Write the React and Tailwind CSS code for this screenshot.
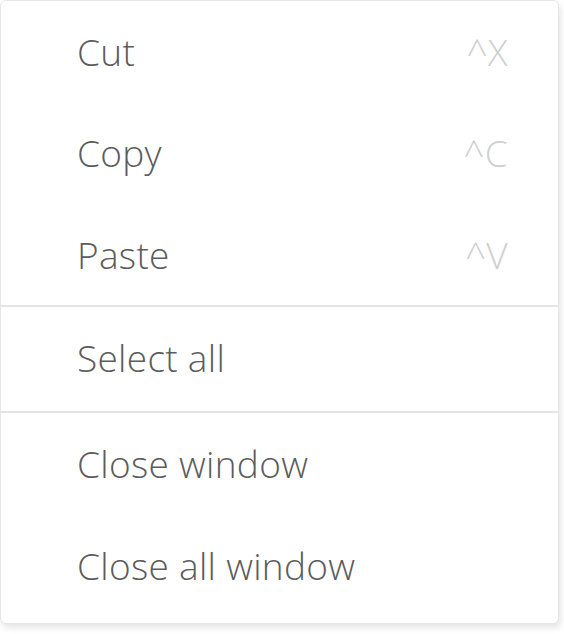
export default function App() {
  return (
    <div className="w-[564px] h-[634px] bg-white">
      <div
        className="flex flex-col w-[559px] h-[624px] bg-white border border-[#e6e6e6] rounded-[6px] shadow-[2px_4px_6px_rgba(0,0,0,0.10)] text-[37px] font-light leading-none tracking-[0.3px]"
        style={{ fontFamily: '"Open Sans", "Noto Sans", sans-serif' }}
      >
        <div className="flex items-center justify-between pl-[76px] pr-[50px] h-[100px]">
          <span className="text-[#5c5c5c]">Cut</span>
          <span className="text-[#d0d0d0]">^X</span>
        </div>
        <div className="flex items-center justify-between pl-[76px] pr-[50px] h-[102px]">
          <span className="text-[#5c5c5c]">Copy</span>
          <span className="text-[#d0d0d0]">^C</span>
        </div>
        <div className="flex items-center justify-between pl-[76px] pr-[50px] h-[102px]">
          <span className="text-[#5c5c5c]">Paste</span>
          <span className="text-[#d0d0d0]">^V</span>
        </div>
        <div className="h-[2px] bg-[#e4e4e4]" />
        <div className="flex items-center pl-[76px] pb-[4px] h-[104px]">
          <span className="text-[#5c5c5c]">Select all</span>
        </div>
        <div className="h-[2px] bg-[#e4e4e4]" />
        <div className="flex items-center pl-[76px] h-[101px]">
          <span className="text-[#5c5c5c]">Close window</span>
        </div>
        <div className="flex items-center pl-[76px] h-[103px]">
          <span className="text-[#5c5c5c]">Close all window</span>
        </div>
      </div>
    </div>
  );
}
